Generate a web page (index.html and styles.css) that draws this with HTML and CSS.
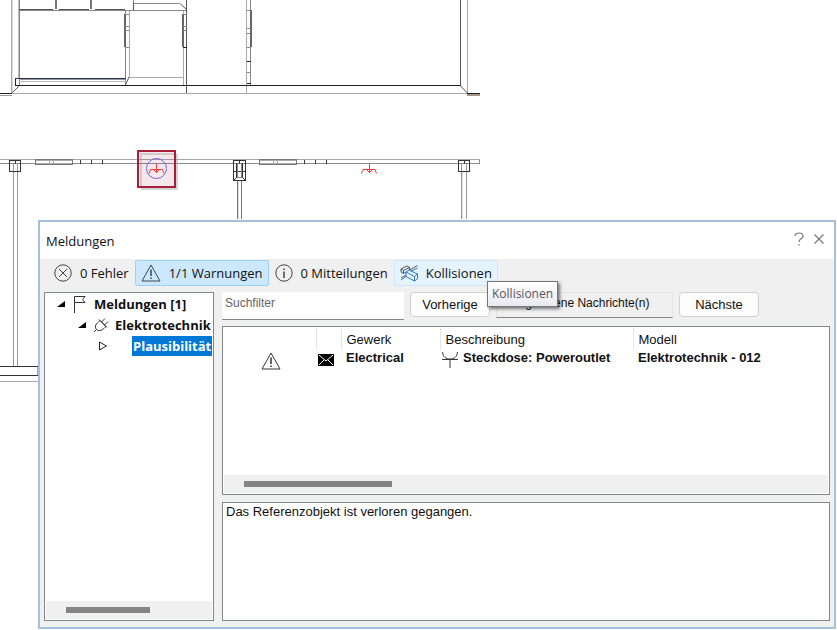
FILE: index.html
```html
<!DOCTYPE html>
<html lang="de">
<head>
<meta charset="utf-8">
<title>Meldungen</title>
<link rel="stylesheet" href="styles.css">
</head>
<body>
<main class="desktop">
  <svg class="plan" width="480" height="400" viewBox="0 0 480 400" fill="none" stroke="#555" shape-rendering="crispEdges" aria-hidden="true">
    <!-- upper section -->
    <g stroke="#aaa">
      <path d="M11.5 0V94M129.5 10V77M129 77.500H183M183.500 10V85M467.500 0V94M11 93.500H467M246.500 0V93" />
      <path d="M12.500 0V94" stroke="#ddd"/>
      <path d="M0 95.500H12M467 95.500H480" stroke="#999"/>
    </g>
    <path d="M19.500 0V85M125.500 10V85M133.500 0V3.500H179M125 10.500H187M250.500 0V85" stroke="#888"/>
    <path d="M18.500 0V78" stroke="#bbb"/>
    <path d="M186.500 0V93M460.500 0V86" stroke="#555"/>
    <path d="M56 0V9M91 0V9" stroke="#777" stroke-width="2"/>
    <path d="M19 9.500H53M59 9.500H89M95 9.500H125" stroke="#555"/>
    <path d="M19 10.500H125" stroke="#888"/>
    <path d="M179.500 3L187 10M133.500 3V10M125.500 85L129 77M12 93L19 86M460.500 86L467.500 93" stroke="#555" shape-rendering="auto"/>
    <path d="M0 93.500H12M467 93.500H480" stroke="#222"/>
    <path d="M467 94.500H480" stroke="#b38d80"/>
    <path d="M15 85.500H460M15.500 78V85" stroke="#222"/>
    <path d="M15 78.500H126" stroke="#30343e"/>
    <path d="M19 79.500H126" stroke="#8f97a8"/>
    <path d="M19 81.500H126" stroke="#bbb"/>
    <path d="M125 14V47M183 14V47M251 10V47" stroke="#666" stroke-width="2"/>
    <path d="M125 14.500H129M125 26.500H129M125 30.500H129M125 47.500H129M183 14.500H187M183 26.500H187M183 30.500H187M183 47.500H187M247 10.500H251M247 28.500H251M247 33.500H251M247 47.500H251M247 72.500H251" stroke="#888"/>
    <path d="M247 61.500H251M247 83.500H251M183 47.500H187" stroke="#222"/>
    <!-- lower plan -->
    <path d="M0 159.500H480" stroke="#a3a8b2"/>
    <path d="M0 163.500H480M479.500 160V164" stroke="#858c9a"/>
    <g stroke="#999">
      <path d="M13.500 164V366M17.500 164V366M461.500 164V219M466.500 164V219"/>
      <path d="M237.500 180V219M241.500 180V219" stroke="#777"/>
      <path d="M238.500 180V219M462.500 171V219" stroke="#ddd"/>
    </g>
    <g stroke="#333">
      <rect x="9.500" y="160.500" width="11" height="11"/>
      <path d="M15.500 160V164M239.500 160V164M464 160V164"/>
      <rect x="458.500" y="160.500" width="11" height="11"/>
      <rect x="233.500" y="160.500" width="12" height="20"/>
      <path d="M233 171.500H246M236.500 163V177M242.500 163V177"/>
      <path d="M237.500 163V177H241.500V163" stroke="#888"/>
      <path d="M233 181L237 177M246 181L242 177" shape-rendering="auto"/>
    </g>
    <rect x="35.500" y="159.500" width="37" height="5" stroke="#777"/>
    <path d="M36 160.500H72M36 163.500H72M49.500 160V164M53.500 160V164" stroke="#aaa"/>
    <rect x="259.500" y="159.500" width="37" height="5" stroke="#777"/>
    <path d="M260 160.500H296M260 163.500H296M273.500 160V164M277.500 160V164" stroke="#aaa"/>
    <path d="M80.500 160V164M91.500 160V164M102.500 160V164M304.500 160V164M315.500 160V164M326.500 160V164" stroke="#333"/>
    <path d="M0 366.500H38M0 375.500H38" stroke="#333"/>
    <path d="M37.500 367V375M0 381.500H38" stroke="#aaa"/>
    <!-- highlighted socket -->
    <path d="M141 189H177V154" stroke="#aaa" stroke-width="2" opacity=".5"/>
    <rect x="138" y="151" width="37" height="36" fill="#a02030" fill-opacity=".1" stroke="#a91e3a" stroke-width="2"/>
    <path d="M140.500 186V153.500H174" stroke="#9a8a8e" stroke-width="2" opacity=".35"/>
    <circle cx="156.500" cy="168.500" r="10" stroke="#7a62dc" shape-rendering="auto"/>
    <g stroke="#f33b3b" shape-rendering="auto">
      <path d="M156.500 164V173M153.500 169.500L156.500 172.500L159.500 169.500M149 173.500L150.500 169.500H162.500L164 173.500"/>
      <path d="M369.500 164V173M366.500 169.500L369.500 172.500L372.500 169.500M361.500 173.500L363 169.500H375L376.500 173.500"/>
    </g>
  </svg>

  <section class="dialog" aria-labelledby="dialog-title">
    <header class="titlebar">
      <h1 id="dialog-title">Meldungen</h1>
      <button class="caption-btn" aria-label="Hilfe"><svg width="12" height="14" viewBox="0 0 12 14"><path d="M2 4C2 0 10 0 10 4C10 7 6 6.500 6 10M6 12V13.500" fill="none" stroke="#777" stroke-width="1.200"/></svg></button>
      <button class="caption-btn" aria-label="Schließen"><svg width="12" height="12" viewBox="0 0 12 12"><path d="M1.500 1.500L10.500 10.500M10.500 1.500L1.500 10.500" fill="none" stroke="#777" stroke-width="1.200"/></svg></button>
    </header>

    <div class="toolbar">
      <button class="tool"><svg width="18" height="18" viewBox="0 0 18 18"><g fill="none" stroke="#444"><circle cx="9" cy="9" r="8.200"/><path d="M5 5L13 13M13 5L5 13"/></g></svg>0 Fehler</button>
      <button class="tool tool-active" aria-pressed="true"><svg width="20" height="18" viewBox="0 0 20 18"><g fill="none" stroke="#3b4650"><path d="M10 1L19 17H1Z"/><path d="M10 5.500V12M10 13.500V15" stroke-width="1.500"/></g></svg>1/1 Warnungen</button>
      <button class="tool"><svg width="18" height="18" viewBox="0 0 18 18"><g fill="none" stroke="#444"><circle cx="9" cy="9" r="8.200"/><path d="M9 4.500V6M9 7.500V14" stroke-width="1.500"/></g></svg>0 Mitteilungen</button>
      <button class="tool tool-hover"><svg width="18" height="18" viewBox="0 0 18 18"><path d="M1 5L7 2L9.500 3.500V6M1 5L3.500 6.500L9.500 3.500M1 5V8L3.500 9.500V6.500M9.500 6L17.500 1.500M1 14L6 11" fill="none" stroke="#555"/><path d="M3.500 9.500L6 8L14.500 12.500V17L6 12.500V8M6 8L9 6L17.500 10V15L14.500 17M14.500 12.500L17.500 10M1 16L6 12.500M11 7L17.500 4" fill="none" stroke="#3878bd"/></svg>Kollisionen</button>
      <div class="tooltip" role="tooltip">Kollisionen</div>
    </div>

    <div class="content">
      <nav class="panel tree" aria-label="Meldungen">
        <ul>
          <li>
            <div class="node"><svg class="arrow" width="10" height="8" viewBox="0 0 10 8"><path d="M9 1V7H1Z" fill="#000"/></svg><svg class="flag" width="14" height="18" viewBox="0 0 14 18"><path d="M1.500 18V1.500H12L9.500 4.500L12 7.500H1.500" fill="none" stroke="#333"/></svg><span>Meldungen [1]</span></div>
            <ul>
              <li>
                <div class="node"><svg class="arrow" width="10" height="8" viewBox="0 0 10 8"><path d="M9 1V7H1Z" fill="#000"/></svg><svg width="16" height="16" viewBox="0 0 16 16"><path d="M1 15L3.500 12.500M3.500 12.500C1 9 3 7 7 3.500L13 9.500C9 13 7 15 3.500 12.500ZM6 2.500L14 10.500M8.500 5L12 1.500M11.500 8L15 4.500" fill="none" stroke="#333"/></svg><span>Elektrotechnik</span></div>
                <ul>
                  <li><div class="node leaf"><svg class="arrow" width="10" height="10" viewBox="0 0 10 10"><path d="M1.500 1V9L8.500 5Z" fill="none" stroke="#222"/></svg><span class="selected">Plausibilität</span></div></li>
                </ul>
              </li>
            </ul>
          </li>
        </ul>
        <div class="scrollbar"><div class="thumb"></div></div>
      </nav>

      <div class="details">
        <div class="filters">
          <input class="search" type="text" placeholder="Suchfilter" aria-label="Suchfilter">
          <button class="push">Vorherige</button>
          <output class="status">1 ungelesene Nachrichte(n)</output>
          <button class="push">Nächste</button>
        </div>
        <div class="panel list">
          <table>
            <colgroup><col class="c-level"><col class="c-mail"><col class="c-trade"><col class="c-desc"><col></colgroup>
            <thead><tr><th></th><th></th><th>Gewerk</th><th>Beschreibung</th><th>Modell</th></tr></thead>
            <tbody><tr>
              <td class="icon level"><svg width="20" height="18" viewBox="0 0 20 18"><g fill="none" stroke="#333"><path d="M10 1L19 17H1Z"/><path d="M10 5.500V12M10 13.500V15" stroke-width="1.500"/></g></svg></td>
              <td class="icon mail"><svg width="16" height="12" viewBox="0 0 16 12"><path d="M0 0H16V12H0Z" fill="#000"/><path d="M1 1L8 7L15 1M1 11L6 6M15 11L10 6" fill="none" stroke="#fff"/></svg></td>
              <td>Electrical</td>
              <td class="desc-cell"><div class="desc"><svg width="18" height="18" viewBox="0 0 18 18"><path d="M1.500 2C2 7 5 9 9 9S16 7 16.500 2M1 9.500H17M9 9.500V18" fill="none" stroke="#333"/></svg>Steckdose: Poweroutlet</div></td>
              <td>Elektrotechnik - 012</td>
            </tr></tbody>
          </table>
          <div class="scrollbar"><div class="thumb thumb-wide"></div></div>
        </div>
        <div class="panel message">Das Referenzobjekt ist verloren gegangen.</div>
      </div>
    </div>
  </section>
</main>
</body>
</html>
```
FILE: styles.css
```css
* { box-sizing: border-box; }

body {
  margin: 0;
  background: #fff;
  color: #111;
  font: 13px/16px "Liberation Sans", Arial, sans-serif;
}

button { font: inherit; color: inherit; margin: 0; }
svg { display: block; flex: none; }

.desktop {
  position: relative;
  min-height: 100vh;
  overflow: hidden;
}

.plan { display: block; }

.dialog {
  position: absolute;
  inset: 220px 1px 1px 38px;
  display: flex;
  flex-direction: column;
  background: #f0f0f0;
  border: 2px solid #a5bfdc;
}

.titlebar {
  display: flex;
  align-items: center;
  gap: 8px;
  height: 37px;
  padding: 0 9px 4px 6px;
  background: #fff;
}

.titlebar h1 {
  flex: 1;
  margin: 0;
  padding-top: 4px;
  font: 13px/18px "Open Sans", "Noto Sans", sans-serif;
}

.caption-btn {
  padding: 0;
  border: 0;
  background: none;
}

.toolbar {
  position: relative;
  display: flex;
  padding: 1px 12px 0 8px;
  font: 13px/18px "Open Sans", "Noto Sans", sans-serif;
}

.tool {
  display: flex;
  align-items: center;
  gap: 8px;
  height: 26px;
  padding: 0 5px;
  border: 1px solid transparent;
  border-radius: 2px;
  background: none;
  white-space: nowrap;
}

.tool-active { background: #cce8ff; border-color: #99d1ff; }
.tool-hover { background: #e5f3ff; border-color: #cce8ff; }

.tooltip {
  position: absolute;
  left: 447px;
  top: 22px;
  z-index: 1;
  padding: 4px;
  border: 1px solid #767676;
  background: linear-gradient(#fff, #e8e9f2);
  box-shadow: 2px 2px 3px rgba(0, 0, 0, .5);
  color: #575757;
  font: 12px/16px "Open Sans", "Noto Sans", sans-serif;
}

.content {
  flex: 1;
  display: flex;
  gap: 8px;
  min-height: 0;
  padding: 6px 4px 6px;
}

.panel {
  background: #fff;
  border: 1px solid #828790;
}

.tree {
  display: flex;
  flex-direction: column;
  justify-content: space-between;
  width: 170px;
  padding: 0 1px 1px;
  font: bold 13px/20px "Open Sans", "Noto Sans", sans-serif;
}

.tree ul { margin: 0; padding: 0; list-style: none; }
.tree > ul { padding-left: 10px; }
.tree ul ul { padding-left: 21px; }

.node {
  display: flex;
  align-items: center;
  gap: 7px;
  height: 21px;
  white-space: nowrap;
}

.tree ul ul .node { gap: 6px; }
.tree ul .leaf .arrow { margin-right: 18px; }
.selected { padding: 0 1px; background: #0078d7; color: #fff; }

.scrollbar {
  height: 18px;
  padding: 6px 20px;
  background: #f0f0f0;
}

.thumb { width: 84px; height: 6px; background: #858585; }
.thumb-wide { width: 148px; }

.details {
  flex: 1;
  display: flex;
  flex-direction: column;
  min-width: 0;
}

.filters {
  display: flex;
  align-items: flex-start;
  gap: 6px;
  height: 34px;
}

.search {
  width: 182px;
  height: 28px;
  padding: 0 3px 6px;
  border: 0;
  border-bottom: 1px solid #868686;
  background: #fff;
  font: inherit;
  font-size: 12px;
}

.search::placeholder { color: #666; opacity: 1; }

.push {
  width: 80px;
  height: 25px;
  padding: 0;
  border: 1px solid #d0d0d0;
  border-radius: 4px;
  background: #fdfdfd;
}

.status {
  width: 177px;
  height: 26px;
  padding: 2px 5px;
  border: 1px solid #e4e4e4;
  border-bottom-color: #868686;
  font-size: 12px;
  white-space: nowrap;
}

.list {
  flex: 170;
  display: flex;
  flex-direction: column;
  justify-content: space-between;
  padding: 1px;
}

table { width: 100%; border-collapse: collapse; table-layout: fixed; }
.c-level { width: 92px; }
.c-mail { width: 25px; }
.c-trade { width: 99px; }
.c-desc { width: 193px; }

th {
  height: 22px;
  padding: 1px 5px 0;
  border-right: 1px solid #e5e5e5;
  font-weight: normal;
  text-align: left;
}

th:last-child { border-right: 0; }

td {
  height: 18px;
  padding: 0 5px 2px;
  font-weight: bold;
  vertical-align: top;
  white-space: nowrap;
}

.icon { padding: 2px 1px 0 2px; }
.level svg { margin: 0 auto; }
.mail { padding-top: 4px; }
.desc-cell { padding-left: 1px; }
.desc { display: flex; gap: 4px; }

.message {
  flex: 118;
  margin-top: 7px;
  padding: 1px 3px;
}
```
